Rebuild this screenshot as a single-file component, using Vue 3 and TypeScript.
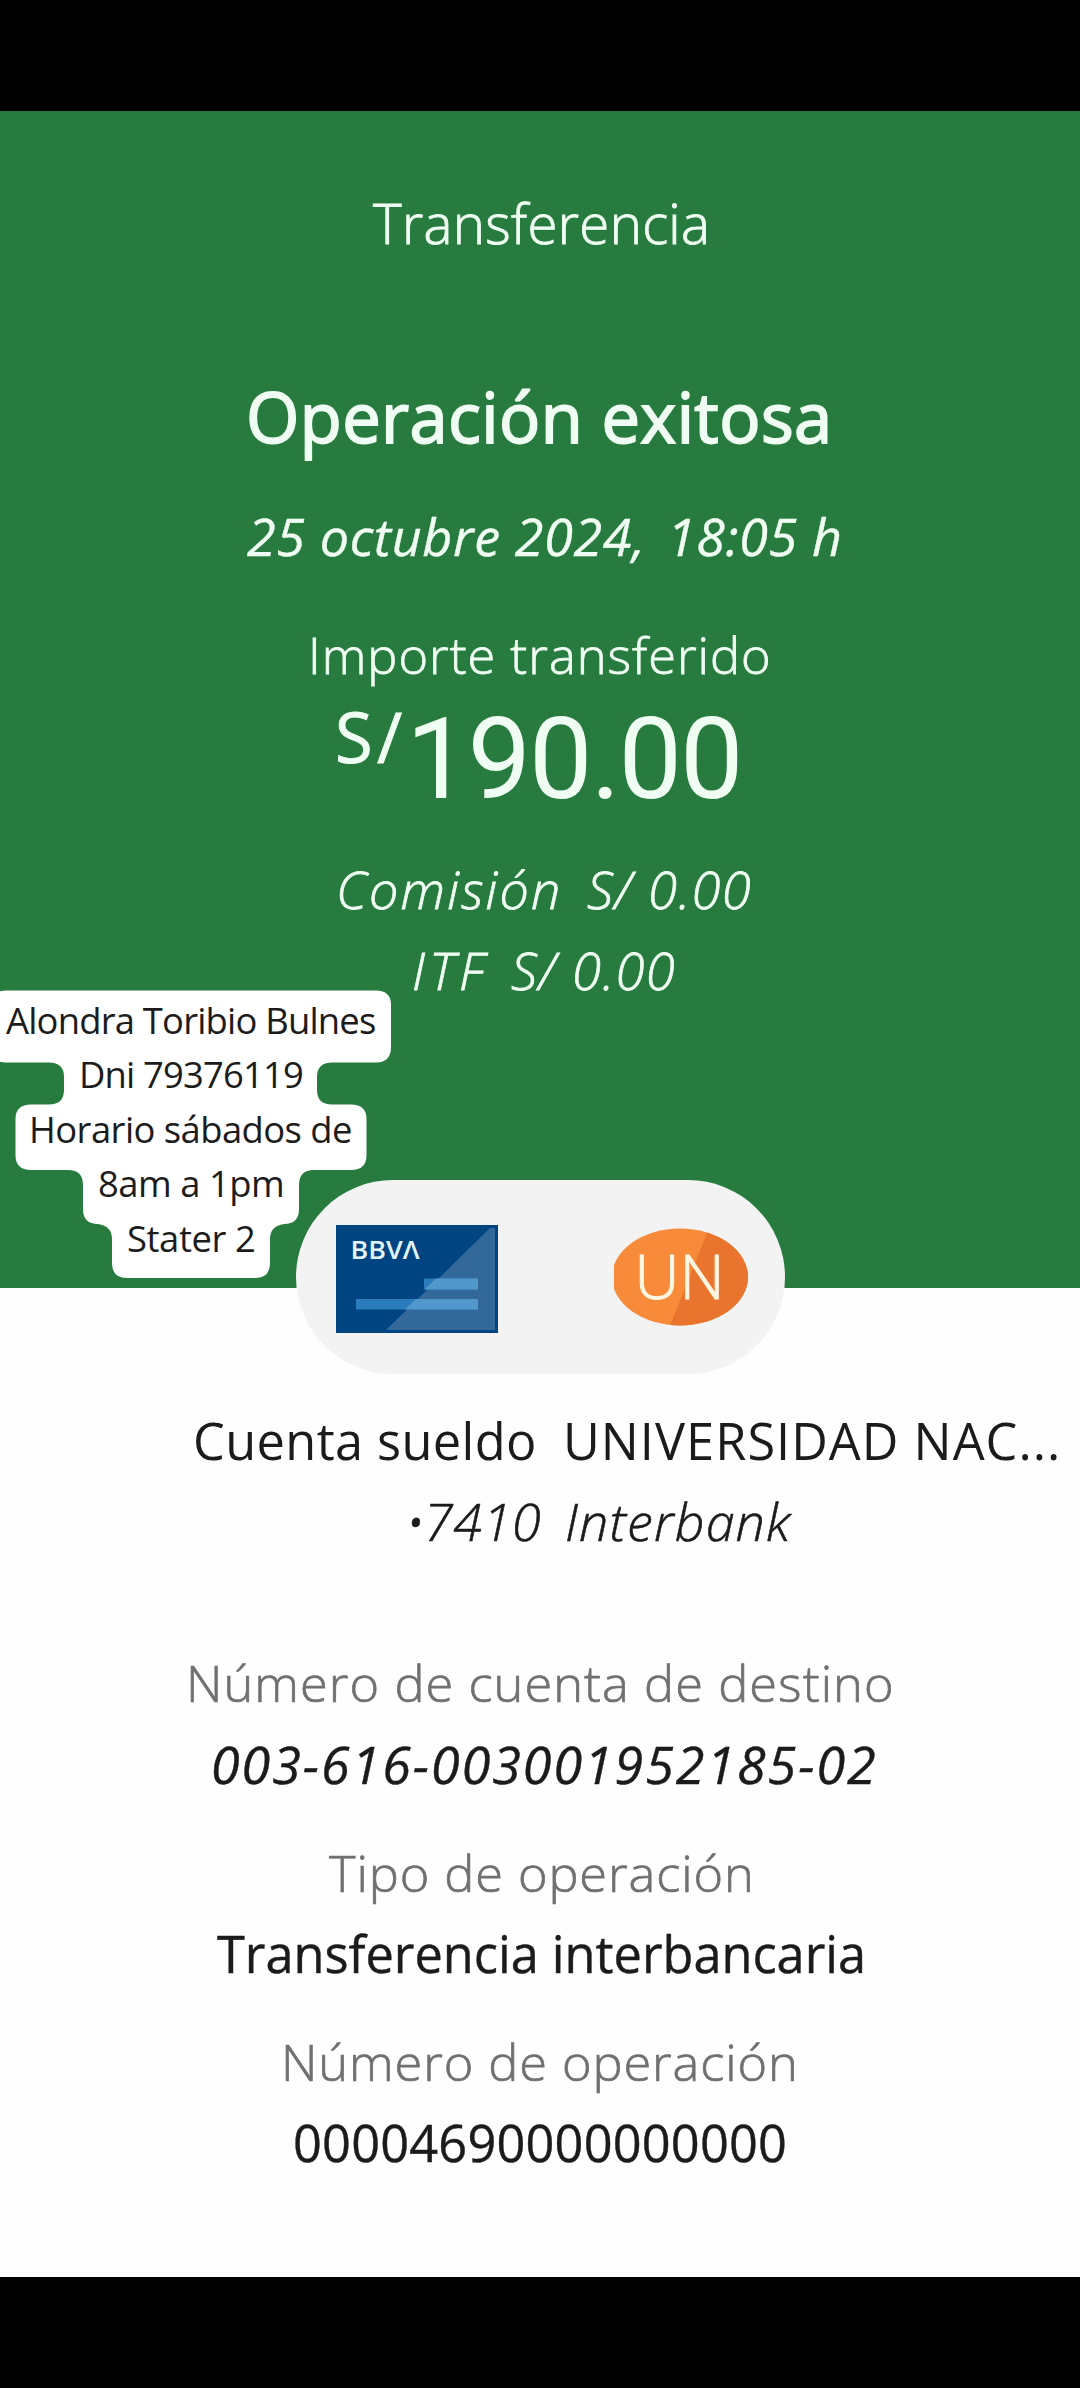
<script setup lang="ts">
import type { Directive } from 'vue'

interface Segment { text: string; x: number; width: number }
interface Line { kind: string; segments: Segment[] }

const seg = (text: string, x: number, width: number): Segment => ({ text, x, width })
const line = (kind: string, ...segments: Segment[]): Line => ({ kind, segments })

const summary: Line[] = [
  line('heading', seg('Transferencia', 373, 333)),
  line('status', seg('Operación exitosa', 250, 577)),
  line('date', seg('25 octubre 2024,', 247, 393), seg('18:05 h', 674, 166)),
  line('caption', seg('Importe transferido', 313, 455)),
]
const symbol = seg('S/', 338, 64)
const amount = seg('190.00', 415, 323)
const fees: Line[] = [
  line('fee', seg('Comisión', 340, 218), seg('S/ 0.00', 587, 163)),
  line('fee tight', seg('ITF', 414, 74), seg('S/ 0.00', 511, 163)),
]
const details: Line[] = [
  line('account', seg('Cuenta sueldo', 196, 338), seg('UNIVERSIDAD NAC...', 567, 490)),
  line('bank', seg('•', 412, 12), seg('7410', 429, 111), seg('Interbank', 567, 225)),
  line('label first', seg('Número de cuenta de destino', 191, 700)),
  line('value slanted', seg('003-616-003001952185-02', 214, 661)),
  line('label', seg('Tipo de operación', 329, 421)),
  line('value', seg('Transferencia interbancaria', 217, 645)),
  line('label', seg('Número de operación', 286, 508)),
  line('value', seg('00004690000000000', 295, 490)),
]
const note: Segment[] = [
  seg('Alondra Toribio Bulnes', 6, 369),
  seg('Dni 79376119', 82, 220),
  seg('Horario sábados de', 32, 319),
  seg('8am a 1pm', 99, 183),
  seg('Stater 2', 128, 126),
]

const offset = (list: Segment[], i: number): string => {
  const prev = i > 0 ? list[i - 1].x + list[i - 1].width : 0
  return `${list[i].x - prev}px`
}

/* Spreads the glyphs so that the visible text fills the width given for it. */
const vFit: Directive<HTMLElement, Segment> = {
  mounted(el, { value }) {
    const ctx = document.createElement('canvas').getContext('2d')!
    const cs = getComputedStyle(el)
    ctx.font = `${cs.fontStyle} ${cs.fontWeight} ${cs.fontSize} ${cs.fontFamily}`
    const m = ctx.measureText(value.text)
    const ink = m.actualBoundingBoxLeft + m.actualBoundingBoxRight
    if (value.text.length > 1) {
      el.style.letterSpacing = `${((value.width - ink) / (value.text.length - 1)).toFixed(3)}px`
    }
    el.style.textIndent = `${m.actualBoundingBoxLeft}px`
  },
}
</script>

<template>
  <main class="screen">
    <div class="bar-top"></div>
    <header class="hero">
      <div v-for="(l, n) in summary" :key="n" class="line" :class="l.kind">
        <span v-for="(s, i) in l.segments" :key="i" v-fit="s" class="seg" :style="{ marginLeft: offset(l.segments, i), width: s.width + 'px' }">{{ s.text }}</span>
      </div>
      <div class="line amount">
        <span v-fit="symbol" class="seg symbol" :style="{ marginLeft: symbol.x + 'px', width: symbol.width + 'px' }">{{ symbol.text }}</span>
        <span v-fit="amount" class="seg figure" :style="{ marginLeft: offset([symbol, amount], 1), width: amount.width + 'px' }">{{ amount.text }}</span>
      </div>
      <div v-for="(l, n) in fees" :key="n" class="line" :class="l.kind">
        <span v-for="(s, i) in l.segments" :key="i" v-fit="s" class="seg" :style="{ marginLeft: offset(l.segments, i), width: s.width + 'px' }">{{ s.text }}</span>
      </div>
    </header>
    <section class="details">
      <div v-for="(l, n) in details" :key="n" class="line" :class="l.kind">
        <span v-for="(s, i) in l.segments" :key="i" v-fit="s" class="seg" :style="{ marginLeft: offset(l.segments, i), width: s.width + 'px' }">{{ s.text }}</span>
      </div>
    </section>
    <div class="bar-bottom"></div>

    <div class="pill">
      <svg class="card" viewBox="0 0 162 108" width="162" height="108">
        <rect width="162" height="108" fill="#004481" />
        <path d="M154 3H159V105H50Z" fill="#33689a" />
        <path d="M20 74H142V84.500H20ZM88 53.500H142V64.500H88Z" fill="#2a7cbc" />
        <path d="M100 53.500H142V64.500H88.500ZM80 74H142V84.500H69Z" fill="#5097cc" />
        <text x="14.500" y="33.500" textLength="69" lengthAdjust="spacingAndGlyphs" class="bbva">BBVΛ</text>
      </svg>
      <svg class="un" viewBox="0 0 134 98" width="134" height="98">
        <defs><clipPath id="disc"><ellipse cx="66" cy="49" rx="68" ry="48.500" /></clipPath></defs>
        <g clip-path="url(#disc)">
          <rect width="134" height="98" fill="#f88b3a" />
          <path d="M95 0H134V98H56Z" fill="#e8742d" />
        </g>
        <text x="20.500" y="70.500" textLength="90" lengthAdjust="spacingAndGlyphs" class="initials">UN</text>
      </svg>
    </div>

    <aside class="note">
      <svg class="bubble" viewBox="0 0 392 289" width="392" height="289">
        <path fill="#fff" d="M-9 15Q-9 .5 6 .5H376Q391 .5 391 15V57Q391 72.500 376 72.500H332Q317 72.500 317 87V100Q317 114.500 332 114.500H351Q366.500 114.500 366.500 129V165Q366.500 180 351 180H314Q299 180 299 195V219Q299 234 284 234Q270 236 270 249V273Q270 288 255 288H127Q112 288 112 273V249Q112 236 98 234Q83 234 83 219V195Q83 180 68 180H31Q15.500 180 15.500 165V129Q15.500 114.500 31 114.500H49Q64 114.500 64 100V87Q64 72.500 49 72.500H6Q-9 72.500 -9 57Z" />
      </svg>
      <div class="note-text">
        <div v-for="s in note" :key="s.text" class="note-line">
          <span v-fit="s" class="seg" :style="{ marginLeft: s.x + 'px', width: s.width + 'px' }">{{ s.text }}</span>
        </div>
      </div>
    </aside>
  </main>
</template>

<style>
body { margin: 0; background: #000; }
</style>

<style scoped>
.screen {
  position: relative;
  width: 1080px;
  height: 2388px;
  overflow: hidden;
  display: flex;
  flex-direction: column;
  background: #000;
  font-family: "Open Sans", "Noto Sans", sans-serif;
  font-kerning: normal;
}
.bar-top { height: 111px; flex: none; }
.bar-bottom { flex: 1; background: #000; }
.hero { height: 1177px; flex: none; background: #277b3e; color: #f0fdf3; display: flow-root; }
.details { height: 989px; flex: none; background: #fefefe; color: #1b1b1b; display: flow-root; }

.line { display: flex; height: 60px; line-height: 60px; white-space: pre; font-size: 50.500px; }
.seg { display: block; flex: none; white-space: pre; }

.heading { margin-top: 82.400px; font-size: 54.500px; font-weight: 300; -webkit-text-stroke: 0.9px; }
.status { margin-top: 134px; font-size: 68.600px; -webkit-text-stroke: 1.8px; }
.date { margin-top: 59px; font-size: 52px; font-style: italic; -webkit-text-stroke: 0.4px; }
.caption { margin-top: 58.500px; font-weight: 300; -webkit-text-stroke: 0.8px; }
.amount { margin-top: 20.800px; height: 100px; line-height: 100px; font-size: 113px; }
.figure { font-family: Roboto, "Open Sans", sans-serif; line-height: 108px; }
.symbol { line-height: 61px; font-size: 68.600px; -webkit-text-stroke: 0.9px; }
.fee { margin-top: 53.400px; font-size: 52px; font-weight: 300; font-style: italic; -webkit-text-stroke: 0.8px; }
.fee.tight { margin-top: 21.200px; }

.account { margin-top: 122.900px; }
.bank { margin-top: 19.900px; font-size: 52px; font-weight: 300; font-style: italic; -webkit-text-stroke: 0.6px; }
.label { margin-top: 48px; font-weight: 300; color: #707070; -webkit-text-stroke: 0.7px; }
.label.first { margin-top: 102.600px; }
.value { margin-top: 21.300px; -webkit-text-stroke: 0.4px; }
.slanted { margin-top: 20.400px; font-size: 52px; font-style: italic; }
.slanted + .label { margin-top: 49px; }

.pill {
  position: absolute;
  left: 296px;
  top: 1180px;
  width: 489px;
  height: 194px;
  border-radius: 97px;
  background: #f3f3f3;
  box-sizing: border-box;
  padding: 0 37px 0 40px;
  display: flex;
  align-items: center;
  justify-content: space-between;
}
.card { margin-top: 3px; }
.bbva { font-size: 25px; font-weight: 600; fill: #e2f4ff; }
.initials { font-size: 60px; font-weight: 300; fill: #fff6e2; stroke: #fff6e2; stroke-width: 1px; }

.note { position: absolute; left: 0; top: 990px; width: 392px; height: 289px; }
.bubble { position: absolute; left: 0; top: 0; display: block; }
.note-text { position: relative; padding-top: 2.600px; }
.note-line { height: 54.500px; line-height: 54.500px; font-size: 36.400px; color: #1c1c1c; }
</style>
